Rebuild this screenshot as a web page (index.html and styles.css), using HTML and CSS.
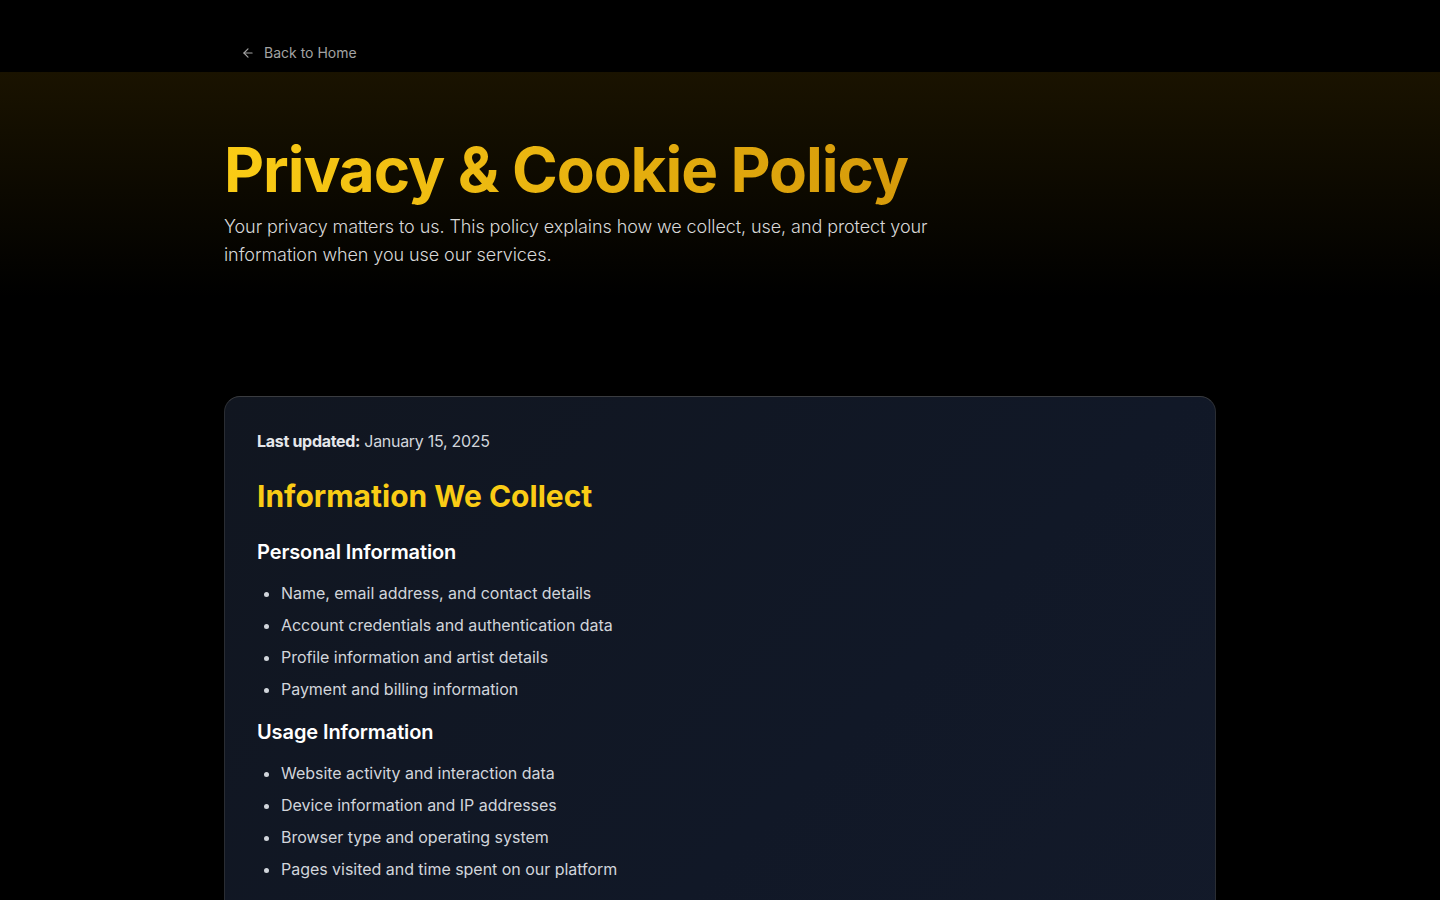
FILE: index.html
```html
<!DOCTYPE html>
<html lang="en">
<head>
<meta charset="utf-8">
<title>Privacy &amp; Cookie Policy</title>
<link rel="stylesheet" href="styles.css">
</head>
<body>
<header class="topbar">
  <div class="container">
    <a class="back" href="#">
      <svg class="back-icon" viewBox="0 0 24 24" width="16" height="16" fill="none" stroke="currentColor" stroke-width="2" stroke-linecap="round" stroke-linejoin="round"><path d="M12 19l-7-7 7-7"/><path d="M19 12H5"/></svg>
      <span>Back to Home</span>
    </a>
  </div>
</header>
<section class="hero">
  <div class="container">
    <h1 class="title">Privacy &amp; Cookie Policy</h1>
    <p class="lead">Your privacy matters to us. This policy explains how we collect, use, and protect your information when you use our services.</p>
  </div>
</section>
<main class="main">
  <div class="container">
    <article class="card">
      <p class="updated"><strong>Last updated:</strong> January 15, 2025</p>
      <h2 class="section-title">Information We Collect</h2>
      <h3 class="sub-title">Personal Information</h3>
      <ul class="list">
        <li>Name, email address, and contact details</li>
        <li>Account credentials and authentication data</li>
        <li>Profile information and artist details</li>
        <li>Payment and billing information</li>
      </ul>
      <h3 class="sub-title">Usage Information</h3>
      <ul class="list">
        <li>Website activity and interaction data</li>
        <li>Device information and IP addresses</li>
        <li>Browser type and operating system</li>
        <li>Pages visited and time spent on our platform</li>
      </ul>
      <h2 class="section-title">How We Use Your Information</h2>
    </article>
  </div>
</main>
</body>
</html>
```
FILE: styles.css
```css
* { box-sizing: border-box; }
html, body { margin: 0; padding: 0; }
body {
  background: #000;
  font-family: Inter, "Noto Sans", sans-serif;
  color: #fff;
  -webkit-font-smoothing: antialiased;
}
.container {
  width: 992px;
  margin: 0 auto;
}
.topbar {
  height: 72px;
  background: #000;
}
.topbar .container {
  height: 72px;
  display: flex;
  align-items: flex-end;
  padding-bottom: 11px;
  padding-left: 17px;
}
.back {
  display: flex;
  align-items: center;
  gap: 9px;
  color: #a3a3a3;
  text-decoration: none;
  font-size: 14px;
  letter-spacing: 0;
}
.back-icon { width: 14px; height: 14px; }
.hero {
  background: linear-gradient(to bottom, #1a1300 0%, #0c0900 45%, #000 85%);
  padding: 62px 0 68px;
}
.title {
  margin: 0;
  font-size: 62px;
  line-height: 72px;
  font-weight: 700;
  letter-spacing: -1.1px;
  background: linear-gradient(to right, #facc15, #d69a0a);
  -webkit-background-clip: text;
  background-clip: text;
  color: transparent;
  display: inline-block;
}
.lead {
  margin: 7px 0 0;
  max-width: 720px;
  font-size: 18px;
  line-height: 28px;
  color: #d8d8d8;
  font-weight: 300;
  letter-spacing: -0.08px;
}
.main { padding-top: 59px; }
.card {
  border: 1px solid #2a2d33;
  border-top-color: #3a3c40;
  border-radius: 16px;
  background: linear-gradient(135deg, #111620 0%, #111827 60%, #131a2a 100%);
  padding: 32px 32px 40px;
  min-height: 600px;
}
.updated {
  margin: 0;
  font-size: 16px;
  line-height: 24px;
  color: #d1d5db;
  letter-spacing: -0.3px;
}
.updated strong { font-weight: 700; color: #e5e7eb; }
.section-title {
  margin: 25px 0 0;
  font-size: 30px;
  line-height: 36px;
  font-weight: 700;
  color: #facc15;
  letter-spacing: 0;
}
.list + .section-title { margin-top: 48px; }
.sub-title {
  margin: 24px 0 0;
  font-size: 20px;
  line-height: 28px;
  font-weight: 600;
  color: #fff;
  letter-spacing: -0.1px;
}
.list + .sub-title { margin-top: 17px; }
.list {
  margin: 15px 0 0;
  padding-left: 24px;
  list-style: disc;
}
.list li {
  font-size: 16px;
  line-height: 24px;
  color: #d1d5db;
  margin-bottom: 8px;
  letter-spacing: -0.03px;
}
.list li::marker { color: #d1d5db; }
```
